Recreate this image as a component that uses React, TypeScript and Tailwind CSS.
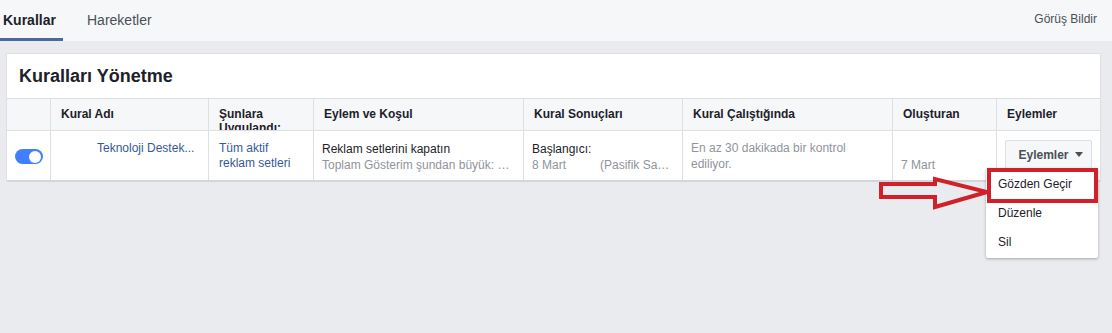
import React from "react";

const headers = [
  "",
  "Kural Adı",
  "Şunlara Uygulandı:",
  "Eylem ve Koşul",
  "Kural Sonuçları",
  "Kural Çalıştığında",
  "Oluşturan",
  "Eylemler",
];

const cols = "grid grid-cols-[43px_158px_105px_210px_159px_210px_104px_1fr]";

const Toggle = () => (
  <div className="w-[28px] h-[15px] rounded-full bg-[#4080ff] flex items-center justify-end pr-[1.5px]">
    <div className="w-[12px] h-[12px] rounded-full bg-white" />
  </div>
);

const App = () => {
  return (
    <div
      className="relative w-[1112px] h-[333px] bg-[#e9ebee] text-[12px] text-[#1d2129] overflow-hidden"
      style={{ fontFamily: '"Liberation Sans", Arial, sans-serif' }}
    >
      {/* top tabs */}
      <div className="h-[41px] bg-[#f6f7f9] flex items-stretch">
        <div className="w-[63px] flex items-center pl-[3px] border-b-[3px] border-[#4b6a9b] pt-[3px] font-bold text-[14px] text-[#1d2129]">
          Kurallar
        </div>
        <div className="ml-[24px] flex items-center pb-[1px] text-[14px] text-[#4b4f56]">
          Hareketler
        </div>
        <div className="ml-auto mr-[15px] flex items-center pb-[3px] text-[12px] text-[#4b4f56]">
          Görüş Bildir
        </div>
      </div>

      {/* card */}
      <div className="mt-[12px] ml-[6px] w-[1095px] bg-white border border-[#dddfe2] border-b-2 border-b-[#d3d6db] rounded-[2px]">
        <div className="h-[44px] flex items-center pl-[12px] pt-[1px] font-bold text-[18px] text-[#1d2129]">
          Kuralları Yönetme
        </div>
        <div className={`${cols} h-[33px] bg-[#f6f7f9] border-t border-b border-[#dddfe2]`}>
          {headers.map((h, i) => (
            <div
              key={i}
              className={`px-[10px] pt-[8px] overflow-hidden font-bold leading-[14px] text-[12px] ${
                i > 0 ? "border-l border-[#dddfe2]" : ""
              }`}
            >
              {h}
            </div>
          ))}
        </div>
        <div className={`${cols} h-[49px]`}>
          <div className="flex items-center justify-center pt-[2px]">
            <Toggle />
          </div>
          <div className="border-l border-[#dddfe2] pl-[46px] pr-[12px] pt-[10px] text-[#365899] truncate leading-[15px]">
            Teknoloji Destek...
          </div>
          <div className="border-l border-[#dddfe2] px-[10px] pt-[10px] text-[#365899] leading-[15px]">
            Tüm aktif
            <br />
            reklam setleri
          </div>
          <div className="border-l border-[#dddfe2] px-[8px] pt-[10px] leading-[16px] min-w-0">
            <div className="truncate">Reklam setlerini kapatın</div>
            <div className="truncate text-[#90949c]">Toplam Gösterim şundan büyük: 10000</div>
          </div>
          <div className="border-l border-[#dddfe2] px-[8px] pt-[10px] leading-[16px] min-w-0">
            <div>Başlangıcı:</div>
            <div className="flex text-[#90949c]">
              <span className="w-[68px] shrink-0">8 Mart</span>
              <span className="truncate">(Pasifik Saati)</span>
            </div>
          </div>
          <div className="border-l border-[#dddfe2] px-[8px] pt-[9px] leading-[16px] text-[#90949c]">
            En az 30 dakikada bir kontrol
            <br />
            ediliyor.
          </div>
          <div className="border-l border-[#dddfe2] px-[8px] pt-[26px] leading-[16px] text-[#90949c]">
            7 Mart
          </div>
          <div className="border-l border-[#dddfe2] pl-[8px] pt-[9px]">
            <div className="w-[87px] h-[29px] bg-[#f6f7f9] border border-[#dddfe2] rounded-[2px] flex items-center justify-center gap-[6px] pl-[4px] font-bold text-[#4b4f56]">
              Eylemler
              <svg width="8" height="5" viewBox="0 0 8 5">
                <path d="M0 0 L8 0 L4 5 Z" fill="#4b4f56" />
              </svg>
            </div>
          </div>
        </div>
      </div>

      {/* dropdown menu */}
      <div className="absolute left-[986px] top-[168px] w-[112px] h-[90px] bg-white rounded-[2px] shadow-[0_1px_3px_rgba(0,0,0,0.3)] text-[12px] text-[#1d2129] flex flex-col pt-[9px]">
        <div className="h-[29px] shrink-0 pl-[12px] leading-[14px]">Gözden Geçir</div>
        <div className="h-[29px] shrink-0 pl-[12px] leading-[14px]">Düzenle</div>
        <div className="h-[29px] shrink-0 pl-[12px] leading-[14px]">Sil</div>
      </div>

      {/* red highlight box */}
      <div className="absolute left-[987px] top-[168px] w-[111px] h-[35px] border-[4px] border-[#d0202a]" />

      {/* red arrow */}
      <svg className="absolute left-[877px] top-[176px]" width="114" height="34" viewBox="0 0 114 34">
        <path
          d="M4 8 L58 8 L58 3 L110 16 L58 31 L58 21 L4 21 Z"
          fill="none"
          stroke="#d0202a"
          strokeWidth="4"
          strokeLinejoin="miter"
        />
      </svg>
    </div>
  );
};

export default App;
